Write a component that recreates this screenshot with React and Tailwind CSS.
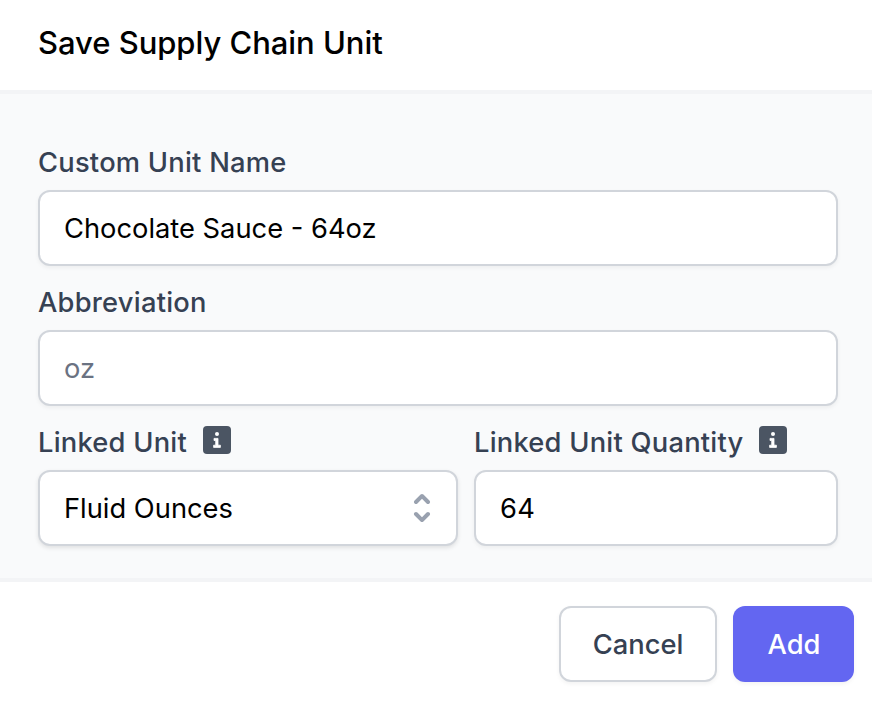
import React from "react";

function InfoBadge() {
  return (
    <svg className="h-7 w-7 -translate-y-0.5" viewBox="0 0 28 28">
      <rect width="28" height="28" rx="4" fill="#4b5563" />
      <circle cx="14" cy="8" r="2" fill="#fff" />
      <path
        d="M11 12.4h4v6.8h2.4v2.2H10.6v-2.2h2.1v-4.7H11z"
        fill="#fff"
        stroke="#fff"
        strokeWidth="0.8"
        strokeLinejoin="round"
      />
    </svg>
  );
}

function Label({ children, info }) {
  return (
    <div className="flex h-10 items-center gap-[15.5px] text-[27.3px] leading-10 font-medium tracking-[0.24px] text-gray-700">
      <span className="mt-0.5">{children}</span>
      {info && <InfoBadge />}
    </div>
  );
}

const field =
  "mt-2 block h-[76px] w-full rounded-xl border-2 border-[#d1d5db] bg-white px-6 text-[27.3px] leading-10 text-black outline-none placeholder:text-gray-500";

const softShadow = " shadow-[0_2px_4px_rgba(0,0,0,0.05)]";
const selectShadow = " shadow-[0_2px_4px_rgba(0,0,0,0.1)]";

export default function App() {
  return (
    <div className="flex h-[704px] w-[872px] flex-col overflow-hidden bg-white font-['Inter',sans-serif]">
      <header className="flex h-[94px] items-center border-b-4 border-gray-100 pl-[38px]">
        <h1 className="-mt-1 text-[31px] leading-10 font-medium tracking-[-0.04px] text-black">Save Supply Chain Unit</h1>
      </header>
      <main className="h-[488px] border-b-4 border-gray-100 bg-gray-50 pt-12 pr-[34px] pl-[38px]">
        <Label>Custom Unit Name</Label>
        <input className={field + softShadow} defaultValue="Chocolate Sauce - 64oz" />
        <div className="mt-4">
          <Label>Abbreviation</Label>
          <input className={field + softShadow} placeholder="oz" />
        </div>
        <div className="mt-4 flex gap-4">
          <div className="w-[420px]">
            <Label info>Linked Unit</Label>
            <button className={field + selectShadow + " text-left"}>
              <span className="flex h-10 items-center justify-between">
                <span className="mt-0.5">Fluid Ounces</span>
                <svg className="-mr-2.5 size-10 text-gray-400" viewBox="0 0 20 20" fill="currentColor">
                  <path
                    fillRule="evenodd"
                    clipRule="evenodd"
                    d="M10 3a1 1 0 01.707.293l3 3a1 1 0 01-1.414 1.414L10 5.414 7.707 7.707a1 1 0 01-1.414-1.414l3-3A1 1 0 0110 3zm-3.707 9.293a1 1 0 011.414 0L10 14.586l2.293-2.293a1 1 0 011.414 1.414l-3 3a1 1 0 01-1.414 0l-3-3a1 1 0 010-1.414z"
                  />
                </svg>
              </span>
            </button>
          </div>
          <div className="flex-1">
            <Label info>Linked Unit Quantity</Label>
            <input className={field + softShadow + " tracking-[0.3px]"} defaultValue="64" />
          </div>
        </div>
      </main>
      <footer className="flex justify-end gap-4 pt-6 pr-[18px] text-[27.3px] leading-10 font-medium">
        <button className="h-[76px] w-[158px] rounded-xl border-2 border-[#d1d5db] bg-white pt-0.5 text-gray-700 shadow-[0_2px_4px_rgba(0,0,0,0.05)]">Cancel</button>
        <button className="h-[76px] w-[121px] rounded-xl bg-[#6366f1] pt-0.5 pl-px text-white shadow-[0_2px_4px_rgba(0,0,0,0.05)]">Add</button>
      </footer>
    </div>
  );
}
